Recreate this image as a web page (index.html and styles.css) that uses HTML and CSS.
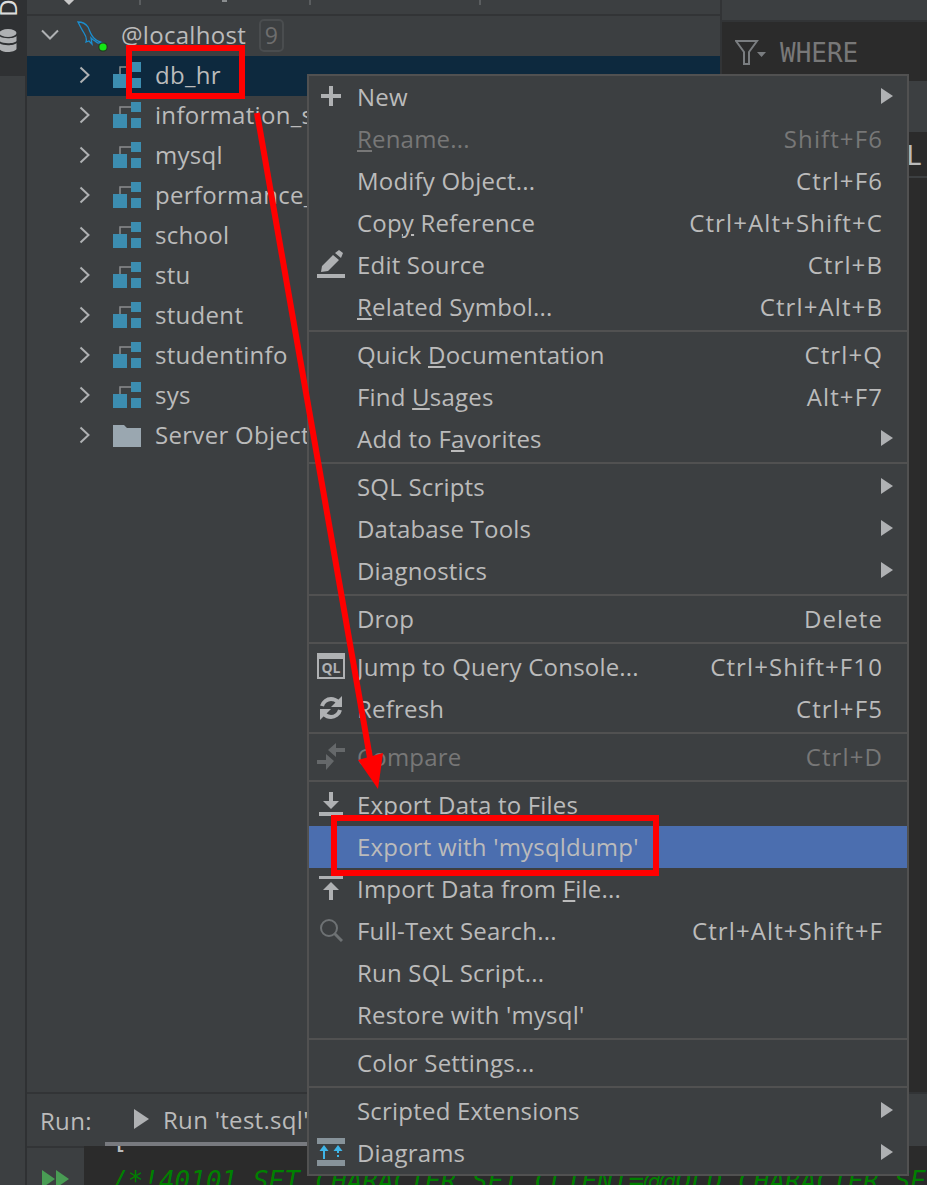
FILE: index.html
```html
<!DOCTYPE html>
<html lang="en">
<head>
<meta charset="utf-8">
<title>Database tool window</title>
<link rel="stylesheet" href="styles.css">
</head>
<body>
<div class="app">
  <aside class="rail">
    <div class="rail-top">
      <span class="rail-label">D</span>
      <svg class="rail-icon" width="18" height="24" viewBox="0 0 18 24"><g fill="#afb1b3"><ellipse cx="9" cy="4" rx="8.500" ry="4"/><path d="M.5 7c2 3 15 3 17 0v5c-2 3-15 3-17 0z"/><path d="M.5 14c2 3 15 3 17 0v6c-2 4-15 4-17 0z"/></g></svg>
    </div>
  </aside>
  <main class="main">
    <div class="upper">
      <section class="tree-pane">
        <div class="tree-toolbar">
          <span class="diamond"></span>
          <span class="tick tick-a"></span>
          <span class="nub"></span>
          <span class="tick tick-b"></span>
          <span class="tick tick-c"></span>
        </div>
        <div class="tree">
          <div class="tree-row root">
            <svg class="chev" width="18" height="12" viewBox="0 0 18 12"><path d="M1 1.500l8 8 8-8" fill="none" stroke="#afb1b3" stroke-width="2"/></svg>
            <svg class="dolphin" width="32" height="32" viewBox="0 0 32 32"><path d="M1 1c4 0 8 2 10 5 2 4 3 9 7 12 2 2 5 3 8 4-3 1-6 0-8-2-2-1-3-2-4-3l1 6-3-3-3 1c1-3 0-6-2-9C5 9 3 5 1 1z" fill="none" stroke="#1b8ecf" stroke-width="1.300"/><circle cx="26" cy="26" r="4.800" fill="#233f23"/><circle cx="26" cy="26" r="3.600" fill="#14e614"/></svg>
            <span class="tree-name">@localhost</span>
            <span class="badge">9</span>
          </div>
          <div class="tree-row selected">
            <svg class="chev-r" width="12" height="18" viewBox="0 0 12 18"><path d="M1.500 1.500l8 7.500-8 7.500" fill="none" stroke="#afb1b3" stroke-width="2"/></svg>
            <svg class="schema" width="28" height="26" viewBox="0 0 28 26"><path d="M7 12V5h11" fill="none" stroke="#8a8d8f" stroke-width="1.500"/><path d="M18 0h10v10H18zM18 16h10v10H18zM0 12h14v14H0z" fill="#3c8db0"/></svg>
            <span class="tree-name">db_hr</span>
          </div>
          <div class="tree-row">
            <svg class="chev-r" width="12" height="18" viewBox="0 0 12 18"><path d="M1.500 1.500l8 7.500-8 7.500" fill="none" stroke="#afb1b3" stroke-width="2"/></svg>
            <svg class="schema" width="28" height="26" viewBox="0 0 28 26"><path d="M7 12V5h11" fill="none" stroke="#8a8d8f" stroke-width="1.500"/><path d="M18 0h10v10H18zM18 16h10v10H18zM0 12h14v14H0z" fill="#3c8db0"/></svg>
            <span class="tree-name">information_schema</span>
          </div>
          <div class="tree-row">
            <svg class="chev-r" width="12" height="18" viewBox="0 0 12 18"><path d="M1.500 1.500l8 7.500-8 7.500" fill="none" stroke="#afb1b3" stroke-width="2"/></svg>
            <svg class="schema" width="28" height="26" viewBox="0 0 28 26"><path d="M7 12V5h11" fill="none" stroke="#8a8d8f" stroke-width="1.500"/><path d="M18 0h10v10H18zM18 16h10v10H18zM0 12h14v14H0z" fill="#3c8db0"/></svg>
            <span class="tree-name">mysql</span>
          </div>
          <div class="tree-row">
            <svg class="chev-r" width="12" height="18" viewBox="0 0 12 18"><path d="M1.500 1.500l8 7.500-8 7.500" fill="none" stroke="#afb1b3" stroke-width="2"/></svg>
            <svg class="schema" width="28" height="26" viewBox="0 0 28 26"><path d="M7 12V5h11" fill="none" stroke="#8a8d8f" stroke-width="1.500"/><path d="M18 0h10v10H18zM18 16h10v10H18zM0 12h14v14H0z" fill="#3c8db0"/></svg>
            <span class="tree-name">performance_schema</span>
          </div>
          <div class="tree-row">
            <svg class="chev-r" width="12" height="18" viewBox="0 0 12 18"><path d="M1.500 1.500l8 7.500-8 7.500" fill="none" stroke="#afb1b3" stroke-width="2"/></svg>
            <svg class="schema" width="28" height="26" viewBox="0 0 28 26"><path d="M7 12V5h11" fill="none" stroke="#8a8d8f" stroke-width="1.500"/><path d="M18 0h10v10H18zM18 16h10v10H18zM0 12h14v14H0z" fill="#3c8db0"/></svg>
            <span class="tree-name">school</span>
          </div>
          <div class="tree-row">
            <svg class="chev-r" width="12" height="18" viewBox="0 0 12 18"><path d="M1.500 1.500l8 7.500-8 7.500" fill="none" stroke="#afb1b3" stroke-width="2"/></svg>
            <svg class="schema" width="28" height="26" viewBox="0 0 28 26"><path d="M7 12V5h11" fill="none" stroke="#8a8d8f" stroke-width="1.500"/><path d="M18 0h10v10H18zM18 16h10v10H18zM0 12h14v14H0z" fill="#3c8db0"/></svg>
            <span class="tree-name">stu</span>
          </div>
          <div class="tree-row">
            <svg class="chev-r" width="12" height="18" viewBox="0 0 12 18"><path d="M1.500 1.500l8 7.500-8 7.500" fill="none" stroke="#afb1b3" stroke-width="2"/></svg>
            <svg class="schema" width="28" height="26" viewBox="0 0 28 26"><path d="M7 12V5h11" fill="none" stroke="#8a8d8f" stroke-width="1.500"/><path d="M18 0h10v10H18zM18 16h10v10H18zM0 12h14v14H0z" fill="#3c8db0"/></svg>
            <span class="tree-name">student</span>
          </div>
          <div class="tree-row">
            <svg class="chev-r" width="12" height="18" viewBox="0 0 12 18"><path d="M1.500 1.500l8 7.500-8 7.500" fill="none" stroke="#afb1b3" stroke-width="2"/></svg>
            <svg class="schema" width="28" height="26" viewBox="0 0 28 26"><path d="M7 12V5h11" fill="none" stroke="#8a8d8f" stroke-width="1.500"/><path d="M18 0h10v10H18zM18 16h10v10H18zM0 12h14v14H0z" fill="#3c8db0"/></svg>
            <span class="tree-name">studentinfo</span>
          </div>
          <div class="tree-row">
            <svg class="chev-r" width="12" height="18" viewBox="0 0 12 18"><path d="M1.500 1.500l8 7.500-8 7.500" fill="none" stroke="#afb1b3" stroke-width="2"/></svg>
            <svg class="schema" width="28" height="26" viewBox="0 0 28 26"><path d="M7 12V5h11" fill="none" stroke="#8a8d8f" stroke-width="1.500"/><path d="M18 0h10v10H18zM18 16h10v10H18zM0 12h14v14H0z" fill="#3c8db0"/></svg>
            <span class="tree-name">sys</span>
          </div>
          <div class="tree-row">
            <svg class="chev-r" width="12" height="18" viewBox="0 0 12 18"><path d="M1.500 1.500l8 7.500-8 7.500" fill="none" stroke="#afb1b3" stroke-width="2"/></svg>
            <svg class="schema" width="28" height="24" viewBox="0 0 28 24"><path d="M0 2h11l3 3h14v19H0z" fill="#9aa7b0"/></svg>
            <span class="tree-name">Server Objects</span>
          </div>
        </div>
      </section>
      <section class="side-pane">
        <div class="side-strip"></div>
        <div class="where-bar">
          <svg width="34" height="26" viewBox="0 0 34 26"><path d="M1 1h21l-8 11v12H9V12z" fill="none" stroke="#7a7d80" stroke-width="2"/><path d="M22 12h9l-4.500 5z" fill="#7a7d80"/></svg>
          <span class="where-text">WHERE</span>
        </div>
        <div class="side-gap"></div>
        <div class="sql-bar"><span class="sql-text">SQL</span></div>
        <div class="results"></div>
      </section>
    </div>
    <div class="run-bar">
      <span class="run-label">Run:</span>
      <div class="run-tab">
        <svg width="17" height="20" viewBox="0 0 17 20"><path d="M1 0l15 10L1 20z" fill="#afb1b3"/></svg>
        <span>Run 'test.sql'</span>
      </div>
    </div>
    <div class="console">
      <div class="console-gutter">
        <svg width="27" height="18" viewBox="0 0 27 18"><path d="M0 0l13 9L0 18zM14 0l13 9-13 9z" fill="#499c54"/></svg>
      </div>
      <div class="console-text"><span class="bracket">[</span><span class="comment">/*!40101 SET CHARACTER_SET_CLIENT=@@OLD_CHARACTER_SET_CLIENT */;</span></div>
    </div>
  </main>
</div>

<nav class="menu">
  <div class="item"><span class="ico"><svg width="20" height="20" viewBox="0 0 20 20"><path d="M8 0h4v8h8v4h-8v8H8v-8H0V8h8z" fill="#afb1b3"/></svg></span><span class="label">New</span><span class="more"></span></div>
  <div class="item off"><span class="ico"></span><span class="label"><u>R</u>ename...</span><span class="keys">Shift+F6</span></div>
  <div class="item"><span class="ico"></span><span class="label">Modify Object...</span><span class="keys">Ctrl+F6</span></div>
  <div class="item"><span class="ico"></span><span class="label">Cop<u>y</u> Reference</span><span class="keys">Ctrl+Alt+Shift+C</span></div>
  <div class="item"><span class="ico"><svg width="28" height="28" viewBox="0 0 28 28"><path d="M4 22l1-6L16 5l6 5-11 11zM18 3l4-3 4 3-2 5z" fill="#afb1b3"/><path d="M0 24h28v4H0z" fill="#afb1b3"/></svg></span><span class="label">Edit Source</span><span class="keys">Ctrl+B</span></div>
  <div class="item"><span class="ico"></span><span class="label"><u>R</u>elated Symbol...</span><span class="keys">Ctrl+Alt+B</span></div>
  <div class="sep"></div>
  <div class="item"><span class="ico"></span><span class="label">Quick <u>D</u>ocumentation</span><span class="keys">Ctrl+Q</span></div>
  <div class="item"><span class="ico"></span><span class="label">Find <u>U</u>sages</span><span class="keys">Alt+F7</span></div>
  <div class="item"><span class="ico"></span><span class="label">Add to F<u>a</u>vorites</span><span class="more"></span></div>
  <div class="sep"></div>
  <div class="item"><span class="ico"></span><span class="label">SQL Scripts</span><span class="more"></span></div>
  <div class="item"><span class="ico"></span><span class="label">Database Tools</span><span class="more"></span></div>
  <div class="item"><span class="ico"></span><span class="label">Diagnostics</span><span class="more"></span></div>
  <div class="sep"></div>
  <div class="item"><span class="ico"></span><span class="label">Drop</span><span class="keys">Delete</span></div>
  <div class="sep"></div>
  <div class="item"><span class="ico"><svg width="28" height="26" viewBox="0 0 28 26"><path d="M0 0h28v26H0z" fill="#afb1b3"/><path d="M2 6h24v18H2z" fill="#3c3f41"/><text x="14" y="20" text-anchor="middle" class="ql">QL</text></svg></span><span class="label">Jump to Query Console...</span><span class="keys">Ctrl+Shift+F10</span></div>
  <div class="item"><span class="ico"><svg width="24" height="24" viewBox="0 0 24 24"><path d="M3 10c1-4 5-7 9-7 3 0 5 1 7 3" fill="none" stroke="#afb1b3" stroke-width="4"/><path d="M23 0v11H12z" fill="#afb1b3"/><path d="M21 14c-1 4-5 7-9 7-3 0-5-1-7-3" fill="none" stroke="#afb1b3" stroke-width="4"/><path d="M1 24V13h11z" fill="#afb1b3"/></svg></span><span class="label">Refresh</span><span class="keys">Ctrl+F5</span></div>
  <div class="sep"></div>
  <div class="item off"><span class="ico"><svg width="28" height="28" viewBox="0 0 28 28"><path d="M11 8l8-7v5h9v4h-9v5zM17 19l-8-7v6H0v4h9v6z" fill="#65686a"/></svg></span><span class="label">Compare</span><span class="keys">Ctrl+D</span></div>
  <div class="sep"></div>
  <div class="item"><span class="ico"><svg width="24" height="24" viewBox="0 0 24 24"><path d="M10 0h4v9h6l-8 8-8-8h6zM0 20h24v4H0z" fill="#afb1b3"/></svg></span><span class="label">Export Data to Files</span></div>
  <div class="item active"><span class="ico"></span><span class="label">Export with 'mysqldump'</span></div>
  <div class="item"><span class="ico"><svg width="24" height="24" viewBox="0 0 24 24"><path d="M0 0h24v3H0zM12 6l8 8h-6v10h-4V14H4z" fill="#afb1b3"/></svg></span><span class="label">Import Data from <u>F</u>ile...</span></div>
  <div class="item"><span class="ico"><svg width="24" height="24" viewBox="0 0 24 24"><circle cx="10" cy="10" r="8" fill="none" stroke="#6e7274" stroke-width="2"/><path d="M15.500 15.500L23 23" stroke="#6e7274" stroke-width="3"/></svg></span><span class="label">Full-Text Search...</span><span class="keys">Ctrl+Alt+Shift+F</span></div>
  <div class="item"><span class="ico"></span><span class="label">Run SQL Script...</span></div>
  <div class="item"><span class="ico"></span><span class="label">Restore with 'mysql'</span></div>
  <div class="sep"></div>
  <div class="item"><span class="ico"></span><span class="label">Color Settings...</span></div>
  <div class="sep"></div>
  <div class="item"><span class="ico"></span><span class="label">Scripted Extensions</span><span class="more"></span></div>
  <div class="item"><span class="ico"><svg width="28" height="28" viewBox="0 0 28 28"><path d="M0 0h28v6H0zM0 22h28v6H0z" fill="#87939a"/><path d="M7 12v9" stroke="#3fb5e8" stroke-width="2"/><path d="M2.500 13L7 7l4.500 6z" fill="#3fb5e8"/><path d="M21 13v8" stroke="#3fb5e8" stroke-width="2" stroke-dasharray="2 2"/><path d="M16.500 13L21 7l4.500 6z" fill="#3fb5e8"/></svg></span><span class="label">Diagrams</span><span class="more"></span></div>
</nav>

<svg class="annot" width="927" height="1185" viewBox="0 0 927 1185">
  <rect x="129" y="48" width="113" height="48" fill="none" stroke="#ff0000" stroke-width="6"/>
  <rect x="334" y="818" width="322" height="55" fill="none" stroke="#ff0000" stroke-width="6"/>
  <path d="M257 113L370 758" stroke="#ff0000" stroke-width="6" fill="none"/>
  <path d="M358 760L383 753L378 789z" fill="#ff0000"/>
</svg>
</body>
</html>
```
FILE: styles.css
```css
* { box-sizing: border-box; }
html, body { margin: 0; height: 100%; }
body {
  position: relative;
  width: 927px;
  height: 1185px;
  overflow: hidden;
  background: #3c3f41;
  color: #bbbbbb;
  font-family: "Open Sans", "Noto Sans", sans-serif;
  font-size: 24px;
  letter-spacing: .3px;
}
.app { display: flex; height: 1185px; }
.rail { width: 27px; background: #3c3f41; border-right: 2px solid #2f3133; flex: none; }
.rail-top { height: 76px; width: 25px; background: #2f3133; overflow: hidden; display: flex; flex-direction: column; align-items: flex-start; }
.rail-label { transform: rotate(-90deg); color: #dddddd; font-size: 24px; line-height: 18px; height: 18px; width: 18px; margin-top: -1px; margin-left: -1px; text-align: center; }
.rail-icon { margin-top: 12px; margin-left: -1px; flex: none; }
.main { flex: 1; display: flex; flex-direction: column; min-width: 0; }
.upper { flex: 1; display: flex; min-height: 0; }
.tree-pane { width: 693px; flex: none; display: flex; flex-direction: column; }
.tree-toolbar { height: 16px; border-bottom: 2px solid #323436; display: flex; align-items: flex-start; flex: none; }
.diamond { width: 10px; height: 10px; background: #c8c8c8; transform: rotate(45deg); margin-top: -7px; margin-left: 37px; }
.tick { width: 2px; height: 5px; background: #5a5d5f; }
.tick-a { margin-left: 65px; }
.nub { width: 5px; height: 2px; background: #8a8d8f; margin-left: 81px; }
.tick-b { margin-left: 82px; }
.tick-c { margin-left: 168px; }
.tree { flex: 1; }
.tree-row { height: 40px; display: flex; align-items: center; padding-left: 52px; padding-bottom: 2px; white-space: nowrap; }
.tree-row.selected { background: #0d293e; }
.tree-row.root { padding-left: 14px; }
.tree-row.root .tree-name { margin-left: 12px; }
.tree-name { padding-bottom: 2px; }
.chev { margin-right: 18px; }
.dolphin { margin-top: 4px; }
.chev-r { margin-right: 22px; }
.schema { margin-right: 14px; }
.badge { margin-left: 13px; width: 25px; height: 33px; border: 2px solid #4a4d4f; border-radius: 5px; color: #6e6e6e; font-size: 23px; display: flex; align-items: center; justify-content: center; }
.side-pane { flex: 1; border-left: 2px solid #323436; display: flex; flex-direction: column; min-width: 0; }
.side-strip { height: 22px; border-bottom: 2px solid #323436; flex: none; }
.where-bar { height: 59px; background: #2b2b2b; display: flex; align-items: center; gap: 11px; padding-left: 13px; padding-top: 2px; flex: none; }
.where-text, .sql-text { font-family: "DejaVu Sans Mono", monospace; font-size: 26px; letter-spacing: 0; }
.where-text { color: #787878; }
.side-gap { height: 51px; flex: none; }
.sql-bar { height: 46px; background: #2b2b2b; border-bottom: 2px solid #3c3f41; flex: none; display: flex; align-items: center; padding-left: 153px; padding-top: 4px; overflow: hidden; white-space: nowrap; }
.sql-text { color: #bbbbbb; }
.results { flex: 1; background: #2b2b2b; }
.run-bar { height: 54px; flex: none; border-top: 2px solid #323436; display: flex; align-items: flex-start; padding-left: 13px; }
.run-label { width: 51px; flex: none; margin-top: 10px; }
.run-tab { margin-left: 14px; padding-left: 28px; padding-top: 2px; height: 54px; display: flex; align-items: center; gap: 13px; border-bottom: 6px solid #787a7f; flex: none; width: 300px; }
.console { height: 39px; flex: none; display: flex; }
.console-gutter { width: 57px; flex: none; display: flex; justify-content: center; padding-top: 22px; border-top: 2px solid #323436; }
.console-text { flex: 1; background: #2b2b2b; font-family: "DejaVu Sans Mono", monospace; font-size: 26px; letter-spacing: 0; padding-left: 28px; overflow: hidden; white-space: nowrap; line-height: 30px; }
.bracket { display: block; height: 42px; margin-top: -22px; line-height: 30px; color: #bbbbbb; }
.comment { font-style: italic; color: #008000; display: block; }
.menu {
  position: absolute;
  left: 307px;
  top: 74px;
  width: 602px;
  background: #3c3f41;
  border: 2px solid #515151;
  letter-spacing: .2px;
}
.item { height: 42px; display: flex; align-items: center; padding-right: 24px; padding-bottom: 2px; white-space: nowrap; }
.item.off { color: #777777; }
.item.active { background: #4b6eaf; }
.ico { width: 48px; flex: none; display: flex; justify-content: center; padding-left: 8px; padding-right: 12px; }
.ico svg { flex: none; }
.label { flex: 1; }
.keys { text-align: right; letter-spacing: 1.1px; }
.more { width: 0; height: 0; border-left: 12px solid #afb1b3; border-top: 8px solid transparent; border-bottom: 8px solid transparent; margin-right: -10px; }
.sep { height: 6px; padding: 2px 0; background-clip: content-box; background-color: #515151; }
.ql { font-family: "Open Sans", sans-serif; font-size: 14px; font-weight: 700; fill: #afb1b3; letter-spacing: 0; }
.annot { position: absolute; left: 0; top: 0; pointer-events: none; }
```
